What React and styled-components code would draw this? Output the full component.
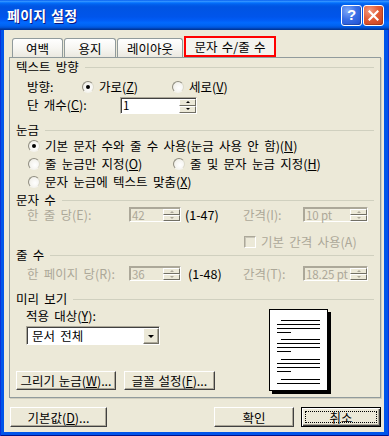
import React from 'react';
import styled, { createGlobalStyle } from 'styled-components';

const FONT = `"Noto Sans CJK KR", "Noto Sans", sans-serif`;

const GlobalStyle = createGlobalStyle`
  html, body { margin: 0; padding: 0; background: #ffffff; }
  body { font-family: ${FONT}; }
  * { box-sizing: border-box; }
`;

const Window = styled.div`
  width: 389px;
  height: 436px;
  display: flex;
  flex-direction: column;
  font-family: ${FONT};
  font-size: 12.5px;
  line-height: 14px;
  word-spacing: 2.5px;
  color: #000;
  overflow: hidden;
`;

const TitleBar = styled.div`
  height: 30px;
  flex: none;
  display: flex;
  align-items: center;
  padding: 0 5px 0 7px;
  background: linear-gradient(180deg, #0058ee 0%, #3593ff 4%, #288eff 6%, #127dff 8%, #036ffc 10%, #0262ee 14%, #0057e5 20%, #0054e3 24%, #0055eb 56%, #005bf5 66%, #026afe 76%, #0062ef 86%, #0052d6 92%, #0040ab 96%, #003092 100%);
`;

const Title = styled.div`
  flex: 1;
  color: #fff;
  font-weight: 700;
  font-size: 14px;
  line-height: 16px;
  letter-spacing: 0.3px;
  word-spacing: 1px;
  text-shadow: 1px 1px 0 #0a1883;
`;

const CaptionButtons = styled.div`
  display: flex;
  gap: 1px;
`;

const CaptionButton = styled.div`
  width: 21px;
  height: 21px;
  border: 1px solid #fff;
  border-radius: 3px;
  display: flex;
  align-items: center;
  justify-content: center;
  color: #fff;
  font-family: "Liberation Sans", Arial, sans-serif;
  font-weight: 700;
  font-size: 15px;
  background: ${(p) =>
    p.$kind === 'close'
      ? 'radial-gradient(circle at 30% 25%, #f29a80 0%, #e25b35 45%, #c8401c 100%)'
      : 'radial-gradient(circle at 30% 25%, #7fa8f8 0%, #3a6fe6 45%, #1d4fd2 100%)'};
  box-shadow: inset -1px -1px 0 rgba(0, 0, 0, 0.2);
`;

const Frame = styled.div`
  flex: 1;
  display: flex;
  padding: 0 5px 4px 4px;
  background: #0055ea;
  box-shadow: inset 1px 0 0 #0831d9, inset -1px 0 0 #0831d9, inset 0 -1px 0 #00138c;
`;

const Body = styled.div`
  flex: 1;
  display: flex;
  flex-direction: column;
  background: #ece9d8;
  padding: 0 3px 5px 5px;
`;

const TabStrip = styled.div`
  height: 27px;
  flex: none;
  display: flex;
  align-items: flex-end;
  gap: 1px;
  padding-left: 3px;
`;

const Tab = styled.div`
  width: ${(p) => p.$w}px;
  height: ${(p) => (p.$active ? 21 : 19)}px;
  display: flex;
  align-items: center;
  justify-content: center;
  white-space: nowrap;
  word-spacing: 1.5px;
  padding-top: ${(p) => (p.$active ? 0 : 1)}px;
  border: ${(p) => (p.$active ? '2px solid #ff0000' : '1px solid #919b9c')};
  border-bottom: ${(p) => (p.$active ? '2px solid #ff0000' : 'none')};
  border-radius: ${(p) => (p.$active ? '0' : '3px 3px 0 0')};
  background: ${(p) =>
    p.$active ? '#f4f3ee' : 'linear-gradient(180deg, #ffffff 0%, #f7f6f2 50%, #ebe9e0 100%)'};
`;

const Panel = styled.div`
  height: 341px;
  flex: none;
  display: flex;
  flex-direction: column;
  border: 1px solid #919b9c;
  box-shadow: 1px 1px 0 #d0cebf;
  background: #ece9d8;
  padding: 3px 6px 2px 6px;
`;

const SectionHead = styled.div`
  height: 12px;
  line-height: 12px;
  flex: none;
  display: flex;
  align-items: center;
  white-space: nowrap;
  margin-top: ${(p) => p.$mt || 0}px;
  &::after {
    content: '';
    flex: 1;
    height: 0;
    border-top: 1px solid #d0d0bf;
    margin-left: 6px;
    margin-top: 1px;
  }
`;

const Row = styled.div`
  display: flex;
  align-items: center;
  flex: none;
  white-space: nowrap;
  height: ${(p) => p.$h || 18}px;
  margin-top: ${(p) => p.$mt || 0}px;
  margin-left: ${(p) => (p.$ml === undefined ? 11 : p.$ml)}px;
`;

const Label = styled.span`
  width: ${(p) => (p.$w ? `${p.$w}px` : 'auto')};
  flex: none;
  margin-left: ${(p) => p.$ml || 0}px;
  color: ${(p) => (p.$disabled ? '#aca899' : '#000')};
`;

const Key = styled.span`
  text-decoration: underline;
  text-underline-offset: 1px;
`;

const Option = styled.span`
  display: flex;
  align-items: center;
  gap: 5px;
  flex: none;
  width: ${(p) => (p.$w ? `${p.$w}px` : 'auto')};
`;

const Radio = styled.span`
  width: 12px;
  height: 12px;
  flex: none;
  border-radius: 50%;
  border: 1px solid;
  border-color: #8f8d80 #dcdacb #f4f3ee #8f8d80;
  background: radial-gradient(circle at 60% 60%, #ffffff 0%, #f4f3ee 60%, #dddbce 100%);
  display: flex;
  align-items: center;
  justify-content: center;
  &::after {
    content: '';
    display: ${(p) => (p.$checked ? 'block' : 'none')};
    width: 4px;
    height: 4px;
    border-radius: 50%;
    background: #000;
  }
`;

const CheckBox = styled.span`
  width: 12px;
  height: 12px;
  flex: none;
  margin-left: ${(p) => p.$ml || 0}px;
  margin-right: 5px;
  border: 1px solid;
  border-color: #aca899 #ffffff #ffffff #aca899;
  box-shadow: inset 1px 1px 0 #c9c6b8;
  background: #ece9d8;
`;

const Spin = styled.div`
  width: ${(p) => p.$w}px;
  height: ${(p) => p.$h}px;
  flex: none;
  display: flex;
  border: 1px solid;
  border-color: #aca899 #ffffff #ffffff #aca899;
  box-shadow: inset 1px 1px 0 ${(p) => (p.$disabled ? '#aca899' : '#404040')};
  background: ${(p) => (p.$disabled ? '#ece9d8' : '#ffffff')};
`;

const SpinValue = styled.span`
  flex: 1;
  min-width: 0;
  white-space: nowrap;
  padding: 0 0 0 2px;
  font-size: 11.5px;
  line-height: 12px;
  letter-spacing: -0.1px;
  word-spacing: 0;
  display: flex;
  align-items: center;
  color: ${(p) => (p.$disabled ? '#aca899' : '#000')};
`;

const SpinButtons = styled.div`
  width: 17px;
  flex: none;
  display: flex;
  flex-direction: column;
  margin: 1px 0 0 0;
`;

const SpinButton = styled.div`
  flex: 1;
  display: flex;
  align-items: center;
  justify-content: center;
  background: #ece9d8;
  border: 1px solid;
  border-color: #ffffff #716f64 #716f64 #ffffff;
  &::after {
    content: '';
    width: 0;
    height: 0;
    border-left: 2px solid transparent;
    border-right: 2px solid transparent;
    ${(p) =>
      p.$dir === 'up'
        ? `border-bottom: 2px solid ${p.$disabled ? '#aca899' : '#000'};`
        : `border-top: 2px solid ${p.$disabled ? '#aca899' : '#000'};`}
  }
`;

const PreviewArea = styled.div`
  display: flex;
  height: 85px;
  flex: none;
  margin-top: 4px;
`;

const PreviewLeft = styled.div`
  width: 253px;
  flex: none;
  display: flex;
  flex-direction: column;
`;

const Combo = styled.div`
  width: 134px;
  height: 19px;
  flex: none;
  margin: 3px 0 0 10px;
  display: flex;
  border: 1px solid;
  border-color: #aca899 #ffffff #ffffff #aca899;
  box-shadow: inset 1px 1px 0 #404040;
  background: #fff;
`;

const ComboText = styled.span`
  flex: 1;
  padding: 1px 0 0 5px;
  display: flex;
  align-items: center;
`;

const ComboButton = styled.div`
  width: 16px;
  flex: none;
  margin: 1px 0 0 0;
  display: flex;
  align-items: center;
  justify-content: center;
  background: #ece9d8;
  border: 1px solid;
  border-color: #ffffff #716f64 #716f64 #ffffff;
  box-shadow: inset -1px -1px 0 #aca899;
  &::after {
    content: '';
    width: 0;
    height: 0;
    border-left: 3px solid transparent;
    border-right: 3px solid transparent;
    border-top: 3px solid #000;
  }
`;

const ButtonRow = styled.div`
  display: flex;
  gap: 8px;
  margin-top: 26px;
`;

const Button = styled.div`
  width: ${(p) => p.$w}px;
  height: ${(p) => p.$h || 19}px;
  flex: none;
  margin-left: ${(p) => p.$ml || 0}px;
  display: flex;
  align-items: center;
  justify-content: center;
  white-space: nowrap;
  word-spacing: 1px;
  background: #ece9d8;
  border: 1px solid;
  border-color: #ffffff #404040 #404040 #ffffff;
  box-shadow: inset -1px -1px 0 #aca899;
  padding-top: 1px;
`;

const DefaultButton = styled.div`
  width: ${(p) => p.$w}px;
  height: 20px;
  flex: none;
  display: flex;
  padding: 3px;
  background: #ece9d8;
  border: 1px solid #000;
  box-shadow: inset 1px 1px 0 #ffffff, inset -1px -1px 0 #404040, inset -2px -2px 0 #aca899;
`;

const FocusRing = styled.span`
  flex: 1;
  display: flex;
  align-items: center;
  justify-content: center;
  border: 1px dotted #000;
  padding-top: 1px;
  line-height: 12px;
`;

const Footer = styled.div`
  display: flex;
  align-items: center;
  height: 20px;
  margin-top: 9px;
  flex: none;
`;

const Spacer = styled.div`
  flex: ${(p) => (p.$w ? 'none' : 1)};
  width: ${(p) => (p.$w ? `${p.$w}px` : 'auto')};
`;

function SpinBox({ w, h, value, disabled }) {
  return (
    <Spin $w={w} $h={h} $disabled={disabled}>
      <SpinValue $disabled={disabled}>{value}</SpinValue>
      <SpinButtons>
        <SpinButton $dir="up" $disabled={disabled} />
        <SpinButton $dir="down" $disabled={disabled} />
      </SpinButtons>
    </Spin>
  );
}

function PagePreview() {
  const paras = [11, 30, 50, 70];
  const lines = [];
  paras.forEach((y0, i) => {
    lines.push(<rect key={`a${i}`} x="12" y={y0} width="39" height="1" fill="#000" />);
    lines.push(<rect key={`b${i}`} x="8" y={y0 + 4} width="43" height="1" fill="#000" />);
    if (i < 3) {
      lines.push(<rect key={`c${i}`} x="8" y={y0 + 8} width="43" height="1" fill="#000" />);
      lines.push(<rect key={`d${i}`} x="8" y={y0 + 12} width="14" height="1" fill="#000" />);
    }
  });
  return (
    <svg width="62" height="85" viewBox="0 0 62 85">
      <rect x="59" y="3" width="3" height="82" fill="#000" />
      <rect x="3" y="82" width="59" height="3" fill="#000" />
      <rect x="0.5" y="0.5" width="58" height="81" fill="#fff" stroke="#000" strokeWidth="1" />
      {lines}
    </svg>
  );
}

export default function App() {
  return (
    <>
      <GlobalStyle />
      <Window>
        <TitleBar>
          <Title>페이지 설정</Title>
          <CaptionButtons>
            <CaptionButton $kind="help">?</CaptionButton>
            <CaptionButton $kind="close">
              <svg width="11" height="11" viewBox="0 0 11 11">
                <path d="M1.5 1.5 L9.5 9.5 M9.5 1.5 L1.5 9.5" stroke="#fff" strokeWidth="2.2" strokeLinecap="square" />
              </svg>
            </CaptionButton>
          </CaptionButtons>
        </TitleBar>
        <Frame>
          <Body>
            <TabStrip>
              <Tab $w={51}>여백</Tab>
              <Tab $w={52}>용지</Tab>
              <Tab $w={66}>레이아웃</Tab>
              <Tab $w={92} $active>문자 수/줄 수</Tab>
            </TabStrip>
            <Panel>
              <SectionHead>텍스트 방향</SectionHead>
              <Row $mt={5}>
                <Label $w={55}>방향:</Label>
                <Option $w={90}>
                  <Radio $checked />
                  <span>가로(<Key>Z</Key>)</span>
                </Option>
                <Option>
                  <Radio />
                  <span>세로(<Key>V</Key>)</span>
                </Option>
              </Row>
              <Row>
                <Label $w={93}>단 개수(<Key>C</Key>):</Label>
                <SpinBox w={77} h={17} value="1" />
              </Row>

              <SectionHead $mt={10}>눈금</SectionHead>
              <Row $mt={1} $ml={12}>
                <Option>
                  <Radio $checked />
                  <span>기본 문자 수와 줄 수 사용(눈금 사용 안 함)(<Key>N</Key>)</span>
                </Option>
              </Row>
              <Row $ml={12}>
                <Option $w={145}>
                  <Radio />
                  <span>줄 눈금만 지정(<Key>O</Key>)</span>
                </Option>
                <Option>
                  <Radio />
                  <span>줄 및 문자 눈금 지정(<Key>H</Key>)</span>
                </Option>
              </Row>
              <Row $ml={12}>
                <Option>
                  <Radio />
                  <span>문자 눈금에 텍스트 맞춤(<Key>X</Key>)</span>
                </Option>
              </Row>

              <SectionHead $mt={3}>문자 수</SectionHead>
              <Row $h={15} $mt={1}>
                <Label $w={102} $disabled>한 줄 당(E):</Label>
                <SpinBox w={52} h={15} value="42" disabled />
                <Label $w={58} $ml={4}>(1-47)</Label>
                <Label $w={60} $disabled>간격(I):</Label>
                <SpinBox w={65} h={15} value="10 pt" disabled />
              </Row>
              <Row $h={14} $mt={13}>
                <CheckBox $ml={217} />
                <Label $disabled>기본 간격 사용(A)</Label>
              </Row>

              <SectionHead>줄 수</SectionHead>
              <Row $h={15} $mt={5}>
                <Label $w={102} $disabled>한 페이지 당(R):</Label>
                <SpinBox w={52} h={15} value="36" disabled />
                <Label $w={55} $ml={7}>(1-48)</Label>
                <Label $w={60} $disabled>간격(T):</Label>
                <SpinBox w={65} h={15} value="18.25 pt" disabled />
              </Row>

              <SectionHead $mt={12}>미리 보기</SectionHead>
              <PreviewArea>
                <PreviewLeft>
                  <Label $ml={10}>적용 대상(<Key>Y</Key>):</Label>
                  <Combo>
                    <ComboText>문서 전체</ComboText>
                    <ComboButton />
                  </Combo>
                  <ButtonRow>
                    <Button $w={100}>그리기 눈금(<Key>W</Key>)...</Button>
                    <Button $w={91}>글꼴 설정(<Key>F</Key>)...</Button>
                  </ButtonRow>
                </PreviewLeft>
                <PagePreview />
              </PreviewArea>
            </Panel>
            <Footer>
              <Button $w={97} $h={20} $ml={1}>기본값(<Key>D</Key>)...</Button>
              <Spacer />
              <Button $w={80} $h={20}>확인</Button>
              <Spacer $w={7} />
              <DefaultButton $w={80}>
                <FocusRing>취소</FocusRing>
              </DefaultButton>
            </Footer>
          </Body>
        </Frame>
      </Window>
    </>
  );
}
